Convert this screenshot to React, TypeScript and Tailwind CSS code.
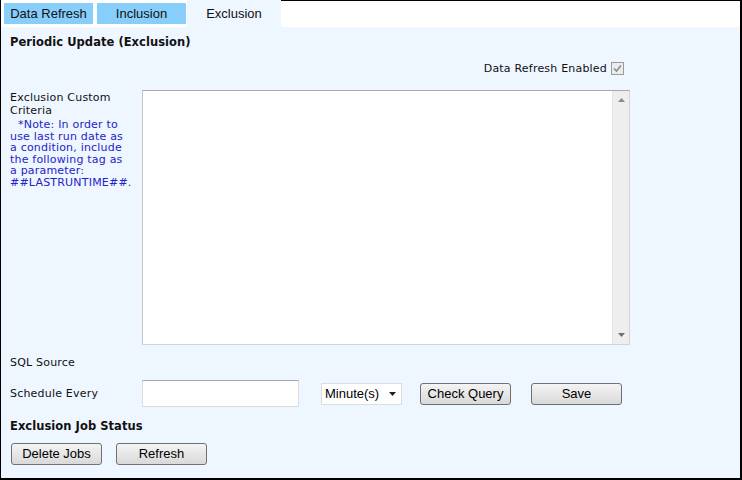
import React from "react";

const label = "font-['DejaVu_Sans',Verdana,sans-serif] text-[11px] leading-[13px] tracking-[0.2px] text-[#111]";
const bold = "font-['DejaVu_Sans',Verdana,sans-serif] text-[11.5px] leading-[13px] tracking-[0.05px] font-bold text-[#111]";
const btn =
  "h-[22px] w-[91px] rounded-[3px] border border-[#707070] bg-gradient-to-b from-[#f4f4f4] to-[#d9d9d9] font-['Liberation_Sans',Arial,sans-serif] text-[13px] leading-[20px] text-black";

function Tab({ text, active }: { text: string; active?: boolean }) {
  if (active) {
    return (
      <div className="flex h-[27px] w-[94px] items-center justify-center bg-[#eef6ff] font-['Liberation_Sans',Arial,sans-serif] text-[13px] text-[#111]">
        {text}
      </div>
    );
  }
  return (
    <div className="flex h-[21px] w-[89px] items-center justify-center bg-[#87cefa] font-['Liberation_Sans',Arial,sans-serif] text-[13px] text-[#111]">
      {text}
    </div>
  );
}

function FakeTextArea() {
  return (
    <div className="flex h-[255px] w-[488px] border border-[#d4d4d4] border-t-[#a8a8a8] border-l-[#c4c4c4] bg-white">
      <div className="flex-1" />
      <div className="flex w-[17px] flex-col items-center justify-between border-l border-[#e4e4e4] bg-[#eeeeee] py-[7px]">
        <svg width="7" height="4" viewBox="0 0 7 4">
          <path d="M0 4 L3.5 0 L7 4 Z" fill="#8a8a8a" />
        </svg>
        <svg width="7" height="4" viewBox="0 0 7 4">
          <path d="M0 0 L7 0 L3.5 4 Z" fill="#707070" />
        </svg>
      </div>
    </div>
  );
}

export default function App() {
  return (
    <div className="flex h-[480px] w-[742px] flex-col border-b-2 border-l border-r-2 border-black bg-[#eef6ff]">
      <div className="flex h-[27px]">
        <div className="flex h-full gap-[4px] bg-white pl-[3px] pt-[3px]">
          <Tab text="Data Refresh" />
          <Tab text="Inclusion" />
        </div>
        <div className="w-[1px] bg-white" />
        <Tab text="Exclusion" active />
        <div className="flex-1 border-t border-black bg-white" />
      </div>

      <div className="flex flex-col pl-[9px]">
        <p className={`${bold} mt-[9px]`}>Periodic Update (Exclusion)</p>

        <div className="mt-[13px] flex items-center justify-end gap-[4px] pr-[116px]">
          <span className={label}>Data Refresh Enabled</span>
          <div className="flex h-[13px] w-[13px] items-center justify-center border border-[#9a9a9a] bg-[#ececec]">
            <svg width="9" height="9" viewBox="0 0 9 9">
              <path d="M1 4.5 L3.5 7 L8 1.5" stroke="#8c8c8c" strokeWidth="1.6" fill="none" />
            </svg>
          </div>
        </div>

        <div className="mt-[15px] flex">
          <div className="w-[132px] pt-[1px]">
            <p className={`${label} leading-[12px]`}>
              Exclusion Custom
              <br />
              Criteria
            </p>
            <p className="mt-[2px] font-['DejaVu_Sans',Verdana,sans-serif] text-[11px] leading-[11.6px] tracking-[0.2px] text-[#2424c8]">
              <span className="block whitespace-nowrap pl-[8px]">*Note: In order to</span>
              <span className="block whitespace-nowrap">use last run date as</span>
              <span className="block whitespace-nowrap">a condition, include</span>
              <span className="block whitespace-nowrap">the following tag as</span>
              <span className="block whitespace-nowrap">a parameter:</span>
              <span className="block whitespace-nowrap">##LASTRUNTIME##.</span>
            </p>
          </div>
          <FakeTextArea />
        </div>

        <p className={`${label} mt-[11px]`}>SQL Source</p>

        <div className="mt-[11px] flex h-[27px] items-center">
          <span className={`${label} w-[132px]`}>Schedule Every</span>
          <div className="h-[27px] w-[157px] border border-[#dcdcdc] border-t-[#a8a8a8] bg-white" />
          <div className="ml-[22px] flex h-[22px] w-[81px] items-center justify-between border border-[#dddddd] bg-white pl-[3px] pr-[5px] font-['Liberation_Sans',Arial,sans-serif] text-[13px] text-black">
            <span>Minute(s)</span>
            <svg width="7" height="4" viewBox="0 0 7 4">
              <path d="M0 0 L7 0 L3.5 4 Z" fill="#222" />
            </svg>
          </div>
          <button className={`${btn} ml-[18px]`}>Check Query</button>
          <button className={`${btn} ml-[20px]`}>Save</button>
        </div>

        <p className={`${bold} mt-[13px]`}>Exclusion Job Status</p>

        <div className="mt-[10px] flex gap-[14px] pl-[1px]">
          <button className={btn}>Delete Jobs</button>
          <button className={btn}>Refresh</button>
        </div>
      </div>
    </div>
  );
}
